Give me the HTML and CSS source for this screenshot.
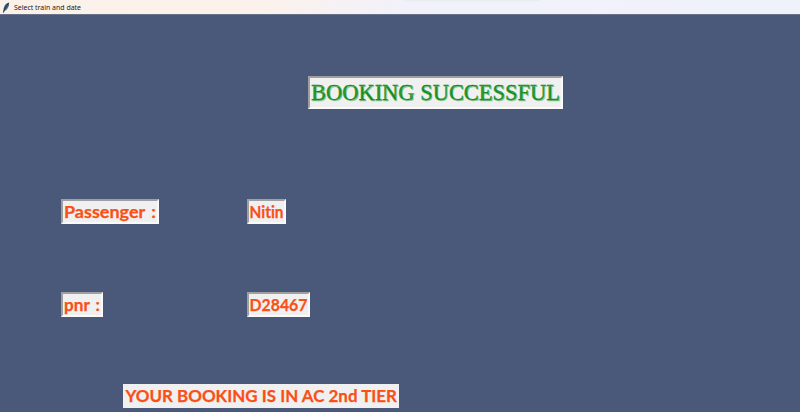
FILE: index.html
```html
<!DOCTYPE html>
<html lang="en">
<head>
<meta charset="utf-8">
<title>Select train and date</title>
<link rel="stylesheet" href="styles.css">
</head>
<body>
<header class="titlebar">
<svg class="feather" width="9" height="11" viewBox="0 0 9 11"><path d="M1.5 10 1.6 6.5C2.3 3.5 4 1 7 .5 7.5 3 6.5 6.5 3 8.8Z" fill="#416582"/><path d="M1.3 10.7C2.4 7 4 4 6.3 1.5" stroke="#172a3c" stroke-width=".9" fill="none"/></svg>
<svg class="caption" width="70" height="14"><text x="0" y="10" textLength="67" lengthAdjust="spacingAndGlyphs">Select train and date</text></svg>
</header>
<main>
<h1 class="label title"><svg width="251" height="29"><text x="1" y="22" textLength="249" lengthAdjust="spacingAndGlyphs">BOOKING SUCCESSFUL</text></svg></h1>
<dl class="details">
<dt class="label"><svg width="94" height="21"><text class="spaced" x="1" y="17" textLength="92" lengthAdjust="spacingAndGlyphs">Passenger :</text></svg></dt>
<dd class="label"><svg width="35" height="21"><text x="0.5" y="17" textLength="34" lengthAdjust="spacingAndGlyphs">Nitin</text></svg></dd>
<dt class="label"><svg width="38" height="21"><text class="spaced" x="1" y="17" textLength="36" lengthAdjust="spacingAndGlyphs">pnr :</text></svg></dt>
<dd class="label"><svg width="59" height="21"><text x="0.5" y="17" textLength="58" lengthAdjust="spacingAndGlyphs">D28467</text></svg></dd>
</dl>
<p class="tier"><svg width="276" height="24"><text x="2.5" y="18" textLength="271.5" lengthAdjust="spacingAndGlyphs">YOUR BOOKING IS IN AC 2nd TIER</text></svg></p>
</main>
</body>
</html>
```
FILE: styles.css
```css
* { box-sizing: border-box; margin: 0; padding: 0; }
body {
  width: 800px;
  height: 412px;
  overflow: hidden;
  display: flex;
  flex-direction: column;
  background: #4a587a;
  font-family: Lato, "Liberation Sans", sans-serif;
}
svg { display: block; overflow: visible; }
.titlebar {
  height: 14px;
  flex: none;
  display: flex;
  align-items: center;
  padding-left: 2px;
  gap: 3px;
  background:
    linear-gradient(#e4edee, #eef1fa) 405px 0 / 135px 2px no-repeat,
    linear-gradient(90deg, #fbf1e9 0, #faf2ec 270px, #f2f1fa 410px, #eff2fb 800px);
}
.caption text { font: 7.5px "Noto Sans", sans-serif; fill: #1c1a18; }
main {
  flex: 1;
  display: flex;
  flex-direction: column;
  align-items: flex-start;
  border-top: 1px solid #68728a;
}
.label {
  background: #f0f0f0;
  border: 2px solid;
  border-color: #a0a0a0 #fafafa #fafafa #a0a0a0;
  width: max-content;
}
.title { margin: 61px 0 0 308px; }
.title text {
  font: 400 24px "Liberation Serif", serif;
  fill: #088a16;
  stroke: #088a16;
  stroke-width: .3px;
  text-shadow: 1px 1px 0 #8fc795;
}
.details {
  margin: 90px 0 0 61px;
  display: grid;
  grid-template-columns: 186px auto;
  row-gap: 68px;
}
.details text, .tier text {
  font-size: 17.5px;
  font-weight: 700;
  font-variant-ligatures: none;
  fill: #fa4f16;
  stroke: #fa4f16;
  stroke-width: .25px;
}
.details .spaced { word-spacing: 2px; }
.tier { margin: 67px 0 0 123px; background: #f0f0f0; }
```
